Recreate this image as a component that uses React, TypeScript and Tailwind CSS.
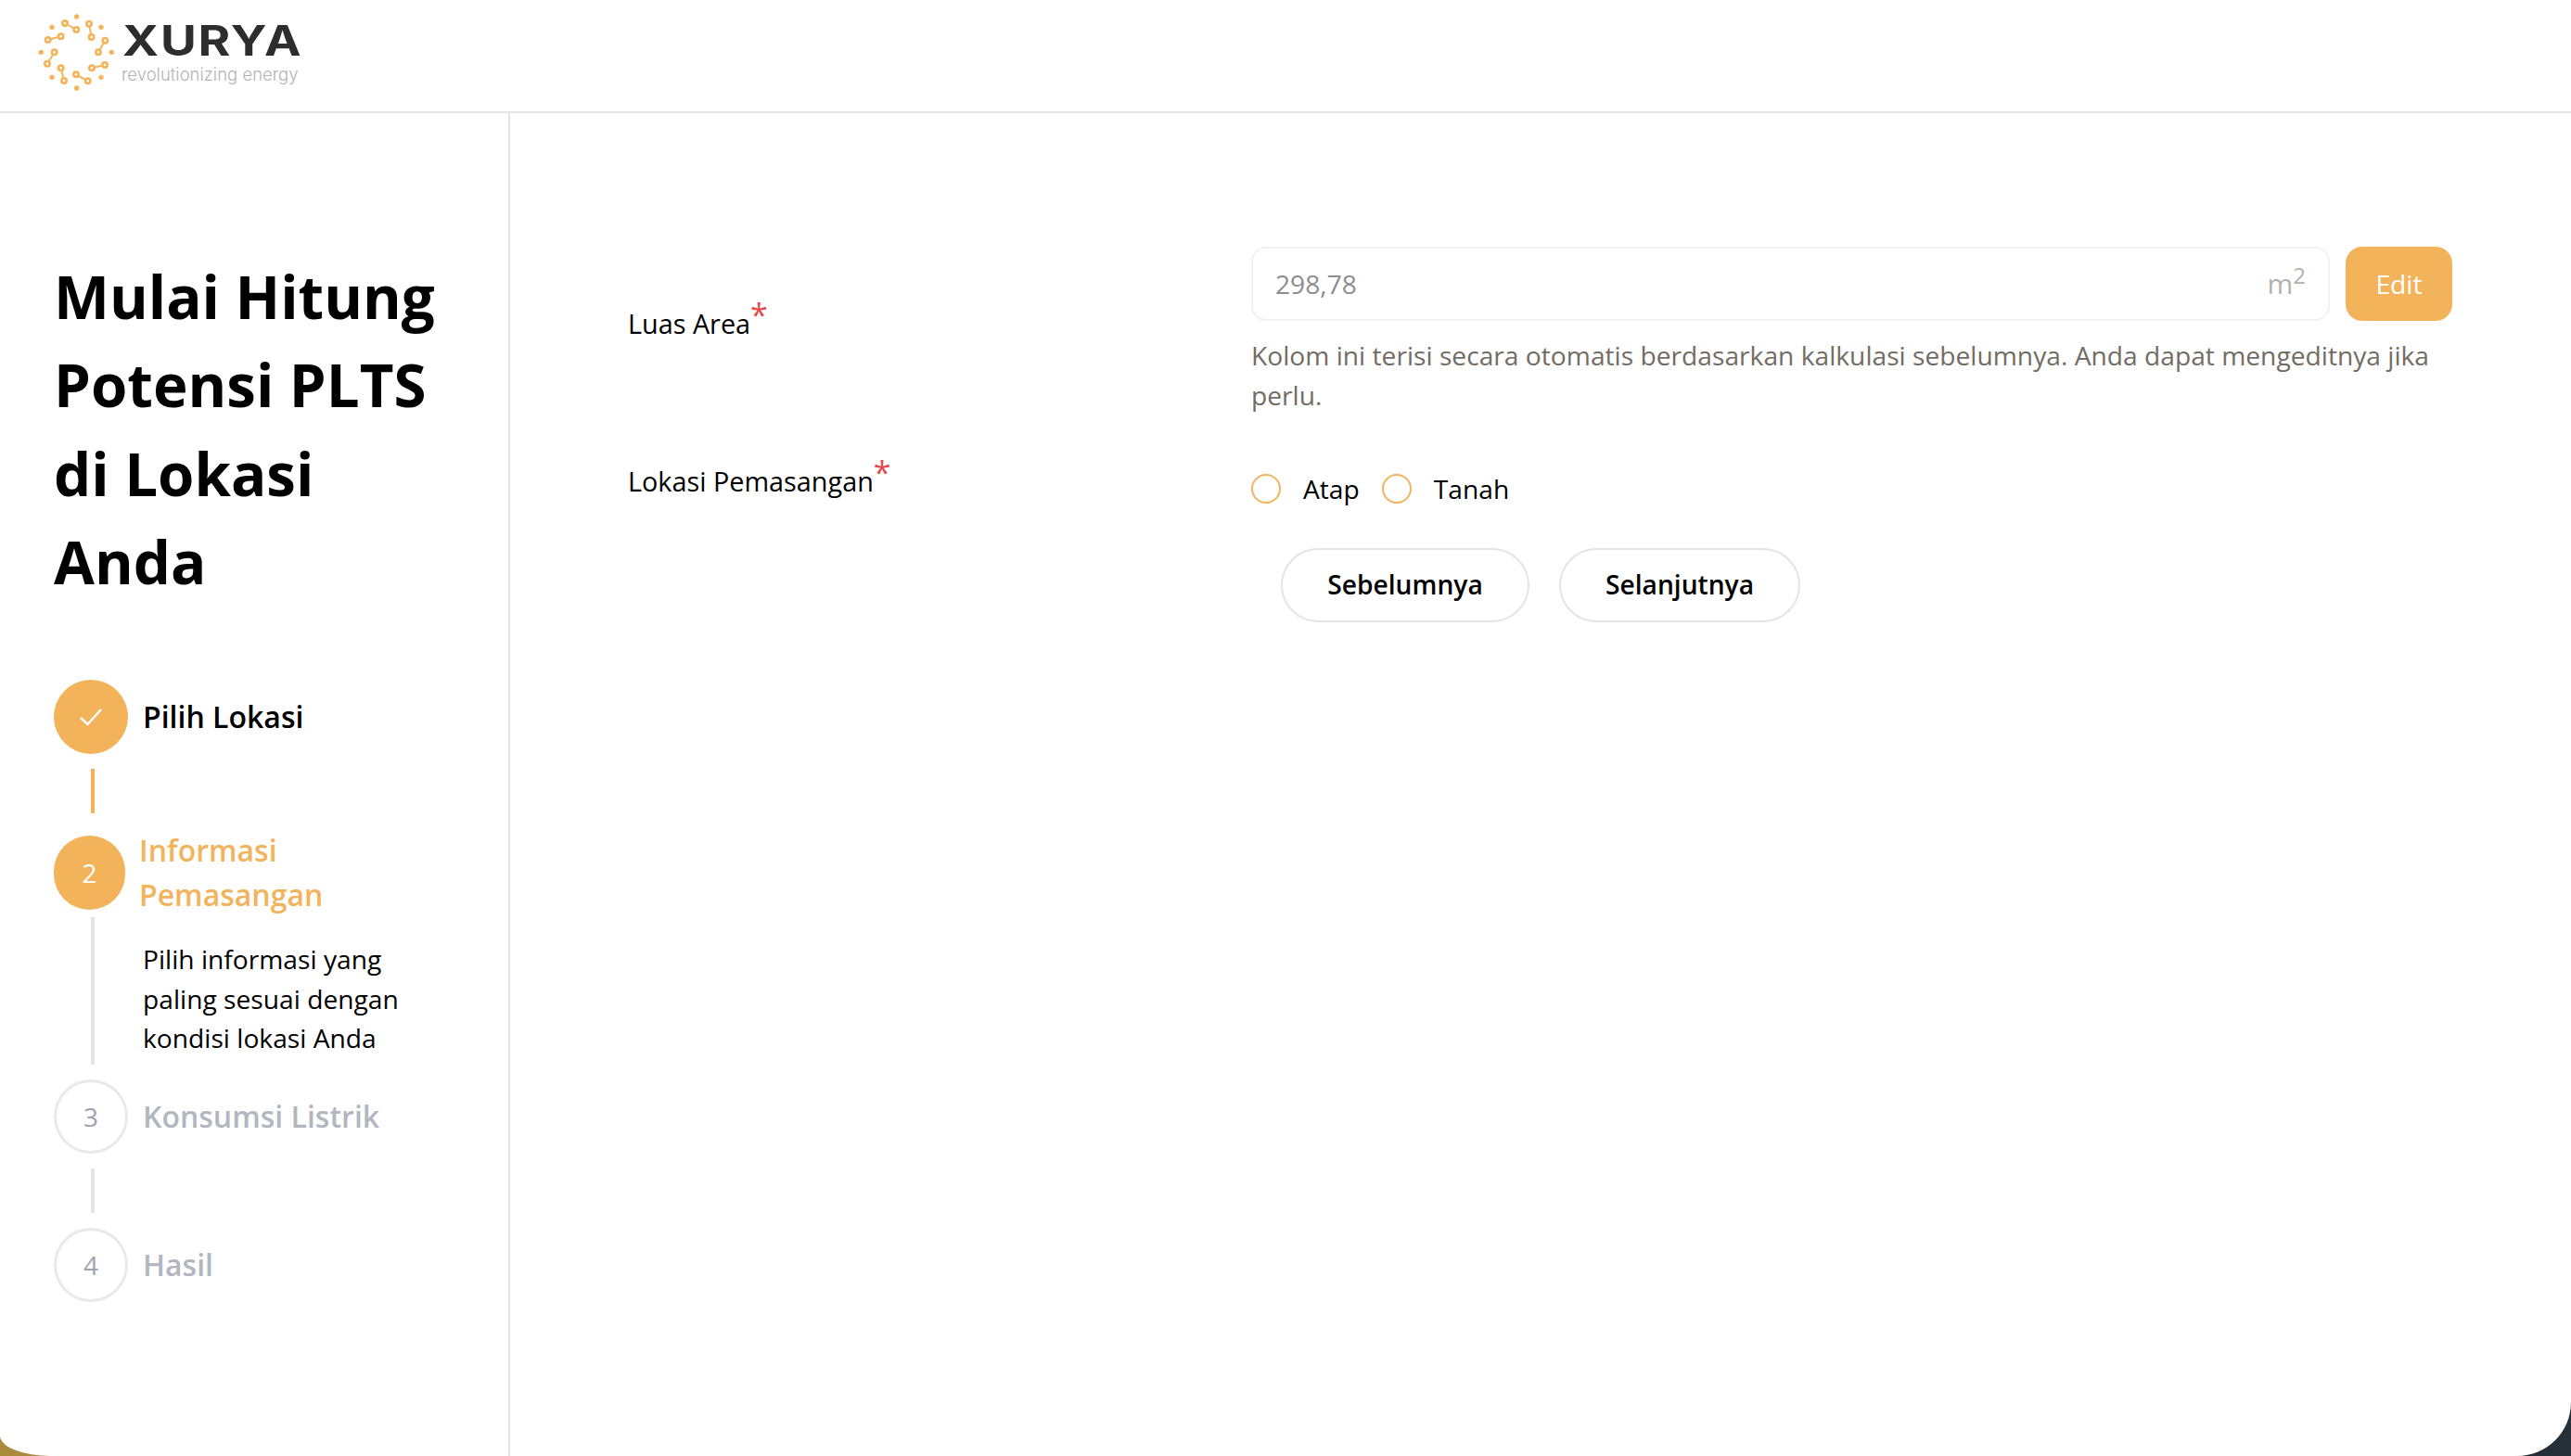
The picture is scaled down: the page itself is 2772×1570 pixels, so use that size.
const font = "[font-family:'Open_Sans',sans-serif]"

function Logo() {
  const dots = [[248,55],[168,89],[327,89],[133,170],[361,170],[168,251],[327,251],[248,286]]
  const links = [
    [210,76,247,97],[288,78,296,121],[340,132,318,170],[339,211,297,221],
    [284,263,246,242],[207,262,197,221],[153,207,176,170],[155,130,197,119],
  ]
  return (
    <div className="flex items-start gap-[7px]">
      <svg width="85" height="85" viewBox="120 40 255 255" className="shrink-0">
        {dots.map(([x, y]) => <circle key={x + '-' + y} cx={x} cy={y} r="8" fill="#f3b45c" />)}
        {links.map(([a, b, c, d]) => (
          <g key={a + '-' + b} stroke="#f3b45c" fill="white">
            <line x1={a} y1={b} x2={c} y2={d} strokeWidth="6" />
            <circle cx={a} cy={b} r="8" strokeWidth="8" />
            <circle cx={c} cy={d} r="8" strokeWidth="8" />
          </g>
        ))}
      </svg>
      <div className="flex flex-col font-['Inter',sans-serif]">
        <span className="origin-left scale-x-[1.18] text-[45px] leading-[54px] mt-[4px] font-bold tracking-[1.5px] text-[#2d2d2d]">XURYA</span>
        <span className="-ml-[1px] text-[18.5px] leading-[20px] -mt-[1px] font-light text-[#b4b4b4] whitespace-nowrap">revolutionizing energy</span>
      </div>
    </div>
  )
}

function Connector({ done = false, h = 'h-[48px]' }: { done?: boolean; h?: string }) {
  return <div className={`ml-[40px] w-[4px] shrink-0 ${h} ${done ? 'bg-[#f3b35b]' : 'bg-[#e4e4e4]'}`} />
}

function Pending({ n, label }: { n: number; label: string }) {
  return (
    <div className="flex items-center gap-[16px]">
      <div className="flex h-[80px] w-[80px] items-center justify-center rounded-full border-[3px] border-[#e8e9ed] text-[28px] text-[#9ea3af]">{n}</div>
      <span className="text-[32px] font-semibold text-[#b2b6c0]">{label}</span>
    </div>
  )
}

function Radio({ label }: { label: string }) {
  return (
    <label className="flex items-center gap-[24px]">
      <span className="h-[32px] w-[32px] rounded-full border-2 border-[#f3b35b] bg-white" />
      <span>{label}</span>
    </label>
  )
}

function Label({ text }: { text: string }) {
  return (
    <div className="text-[28.8px] font-medium text-black whitespace-nowrap">
      {text}<sup className="relative top-[-8px] align-baseline text-[34px] font-normal leading-none text-[#e5484d]">*</sup>
    </div>
  )
}

export default function App() {
  return (
    <div className="h-[1570px] w-[2772px] overflow-hidden bg-[linear-gradient(90deg,#a98b3b_0%,#a98b3b_2%,#252f38_90%)]">
      <div className={`flex h-full flex-col rounded-bl-[55px_22px] rounded-br-[58px] bg-white text-[28.2px] leading-[42.5px] text-black ${font}`}>
        <header className="flex h-[122px] shrink-0 items-start border-b-2 border-[#e2e2e2] pl-[40px] pt-[13px]">
          <Logo />
        </header>
        <div className="flex flex-1">
          <aside className="w-[550px] shrink-0 border-r-2 border-[#e2e2e2] pl-[58px] pt-[150px]">
            <h1 className="w-[460px] text-[63.6px] font-bold leading-[95.3px]">Mulai Hitung Potensi PLTS di Lokasi Anda</h1>

            <div className="mt-[80px] flex items-center gap-[16px]">
              <div className="flex h-[80px] w-[80px] items-center justify-center rounded-full bg-[#f3b35b]">
                <svg width="26" height="20" viewBox="0 0 26 20" fill="none" stroke="white" strokeWidth="2.4">
                  <path d="M2 11 L9.5 18 L24 2" />
                </svg>
              </div>
              <span className="text-[32px] font-semibold text-black">Pilih Lokasi</span>
            </div>
            <div className="mt-[16px]"><Connector done /></div>

            <div className="mt-[24px] flex h-[80px] items-center gap-[15px]">
              <div className="flex h-[80px] w-[77px] items-center justify-center rounded-full bg-[#f3b35b] text-[28px] text-white">2</div>
              <span className="w-[240px] text-[32px] font-semibold leading-[48px] text-[#f3b35b]">Informasi Pemasangan</span>
            </div>
            <div className="mt-[8px] flex">
              <Connector h="h-[159px]" />
              <p className="ml-[52px] mt-[24px] w-[320px]">Pilih informasi yang paling sesuai dengan kondisi lokasi Anda</p>
            </div>

            <div className="mt-[16px]"><Pending n={3} label="Konsumsi Listrik" /></div>
            <div className="mt-[16px]"><Connector /></div>
            <div className="mt-[16px]"><Pending n={4} label="Hasil" /></div>
          </aside>

          <main className="flex-1 pl-[127px] pr-[128px] pt-[144px]">
            <div className="grid grid-cols-[672px_1fr]">
              <div className="pt-[62px]"><Label text="Luas Area" /></div>
              <div>
                <div className="flex gap-[17px]">
                  <div className="flex h-[80px] flex-1 items-center justify-between rounded-[16px] border-2 border-[#f1f1f1] px-[24px]">
                    <span className="text-[#8d8d8d]">298,78</span>
                    <span className="text-[30px] text-[#b5b0aa]">m<sup className="relative top-[-11px] align-baseline text-[24px] leading-none">2</sup></span>
                  </div>
                  <button className="h-[80px] w-[115px] rounded-[18px] bg-[#f3b35b] text-white">Edit</button>
                </div>
                <p className="mt-[16px] text-[#736c64]">Kolom ini terisi secara otomatis berdasarkan kalkulasi sebelumnya. Anda dapat mengeditnya jika perlu.</p>
              </div>

              <div className="pt-[51px]"><Label text="Lokasi Pemasangan" /></div>
              <div>
                <div className="mt-[59px] flex gap-[24px]">
                  <Radio label="Atap" />
                  <Radio label="Tanah" />
                </div>
                <div className="ml-[32px] mt-[42px] flex gap-[32px]">
                  <button className="h-[80px] w-[268px] rounded-full border-2 border-[#e4e4e4] font-semibold">Sebelumnya</button>
                  <button className="h-[80px] w-[260px] rounded-full border-2 border-[#e4e4e4] font-semibold">Selanjutnya</button>
                </div>
              </div>
            </div>
          </main>
        </div>
      </div>
    </div>
  )
}
